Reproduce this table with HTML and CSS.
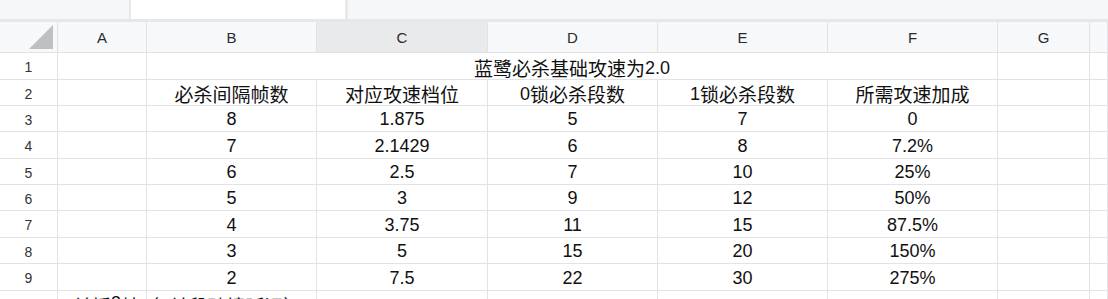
FILE: index.html
```html
<!DOCTYPE html>
<html lang="zh">
<head>
<meta charset="utf-8">
<link rel="stylesheet" href="styles.css">
</head>
<body>
<div class="topbar">
  <div class="tb-left"></div>
  <div class="tb-box"></div>
  <div class="tb-right"></div>
</div>
<div class="sheet">
  <div class="corner"><svg width="24" height="24" viewBox="0 0 24 24"><polygon points="24,0 24,24 0,24" fill="#bec0c3"/></svg></div>
  <div class="ch">A</div>
  <div class="ch">B</div>
  <div class="ch ch-sel">C</div>
  <div class="ch">D</div>
  <div class="ch">E</div>
  <div class="ch">F</div>
  <div class="ch">G</div>
  <div class="ch"></div>

  <div class="rh">1</div>
  <div class="c"></div>
  <div class="c merge"><span class="zh">蓝鹭必杀基础攻速为</span><span class="lat">2.0</span></div>
  <div class="c"></div>
  <div class="c"></div>

  <div class="rh">2</div>
  <div class="c"></div>
  <div class="c"><span class="zh">必杀间隔帧数</span></div>
  <div class="c"><span class="zh">对应攻速档位</span></div>
  <div class="c"><span class="lat">0</span><span class="zh">锁必杀段数</span></div>
  <div class="c"><span class="lat">1</span><span class="zh">锁必杀段数</span></div>
  <div class="c"><span class="zh">所需攻速加成</span></div>
  <div class="c"></div>
  <div class="c"></div>

  <div class="rh">3</div>
  <div class="c"></div>
  <div class="c">8</div>
  <div class="c">1.875</div>
  <div class="c">5</div>
  <div class="c">7</div>
  <div class="c">0</div>
  <div class="c"></div>
  <div class="c"></div>

  <div class="rh">4</div>
  <div class="c"></div>
  <div class="c">7</div>
  <div class="c">2.1429</div>
  <div class="c">6</div>
  <div class="c">8</div>
  <div class="c">7.2%</div>
  <div class="c"></div>
  <div class="c"></div>

  <div class="rh">5</div>
  <div class="c"></div>
  <div class="c">6</div>
  <div class="c">2.5</div>
  <div class="c">7</div>
  <div class="c">10</div>
  <div class="c">25%</div>
  <div class="c"></div>
  <div class="c"></div>

  <div class="rh">6</div>
  <div class="c"></div>
  <div class="c">5</div>
  <div class="c">3</div>
  <div class="c">9</div>
  <div class="c">12</div>
  <div class="c">50%</div>
  <div class="c"></div>
  <div class="c"></div>

  <div class="rh">7</div>
  <div class="c"></div>
  <div class="c">4</div>
  <div class="c">3.75</div>
  <div class="c">11</div>
  <div class="c">15</div>
  <div class="c">87.5%</div>
  <div class="c"></div>
  <div class="c"></div>

  <div class="rh">8</div>
  <div class="c"></div>
  <div class="c">3</div>
  <div class="c">5</div>
  <div class="c">15</div>
  <div class="c">20</div>
  <div class="c">150%</div>
  <div class="c"></div>
  <div class="c"></div>

  <div class="rh">9</div>
  <div class="c"></div>
  <div class="c">2</div>
  <div class="c">7.5</div>
  <div class="c">22</div>
  <div class="c">30</div>
  <div class="c">275%</div>
  <div class="c"></div>
  <div class="c"></div>

  <div class="rh">10</div>
  <div class="c left"><span class="zh">兰摇</span><span class="lat">3</span><span class="zh">帧（+兰段破境延迟）</span></div>
  <div class="c"></div>
  <div class="c"></div>
  <div class="c"></div>
  <div class="c"></div>
  <div class="c"></div>
  <div class="c"></div>
  <div class="c"></div>
</div>
</body>
</html>
```

FILE: styles.css
```css
html, body {
  margin: 0;
  padding: 0;
  background: #ffffff;
  overflow: hidden;
}

body {
  width: 1108px;
  height: 299px;
  font-family: "Liberation Sans", "Noto Sans CJK SC", sans-serif;
  color: #1a1a1a;
}

.topbar {
  display: flex;
  height: 19px;
  border-bottom: 3px solid #e6e7e9;
  background: #f6f7f9;
}

.tb-left {
  width: 129px;
  border-right: 2px solid #e8e9eb;
}

.tb-box {
  width: 214px;
  background: #ffffff;
  border-right: 3px solid #e8e9eb;
}

.tb-right {
  flex: 1;
}

.sheet {
  display: grid;
  grid-template-columns: 58px 89px 170px 171px 170px 170px 170px 92px 18px;
  grid-template-rows: 31px 27px 26px 26px 27px 26px 26px 27px 26px 27px 30px;
}

.sheet > div {
  box-sizing: border-box;
  border-right: 1px solid #e2e3e6;
  border-bottom: 1px solid #e2e3e6;
  display: flex;
  align-items: center;
  justify-content: center;
  white-space: nowrap;
  min-width: 0;
}

.corner {
  background: #f7f8fa;
  justify-content: flex-end !important;
  align-items: flex-end !important;
  padding: 0 4px 3px 0;
}

.corner svg {
  display: block;
}

.ch {
  background: #f7f8fa;
  font-size: 15px;
  color: #2b2b2b;
  padding-top: 1px;
}

.ch-sel {
  background: #e9eaec;
}

.rh {
  background: #ffffff;
  font-size: 14px;
  color: #333333;
  padding-top: 2px;
}

.c {
  font-size: 18px;
  color: #111111;
  padding-top: 2px;
}

.zh {
  font-family: "Noto Sans CJK SC", sans-serif;
  font-size: 19px;
}

.lat {
  position: relative;
  top: 1px;
}

.merge {
  grid-column: 3 / 8;
}

.left {
  justify-content: flex-start !important;
  padding-left: 15px;
  overflow: visible;
  align-items: flex-start !important;
  padding-top: 1px;
}
```
